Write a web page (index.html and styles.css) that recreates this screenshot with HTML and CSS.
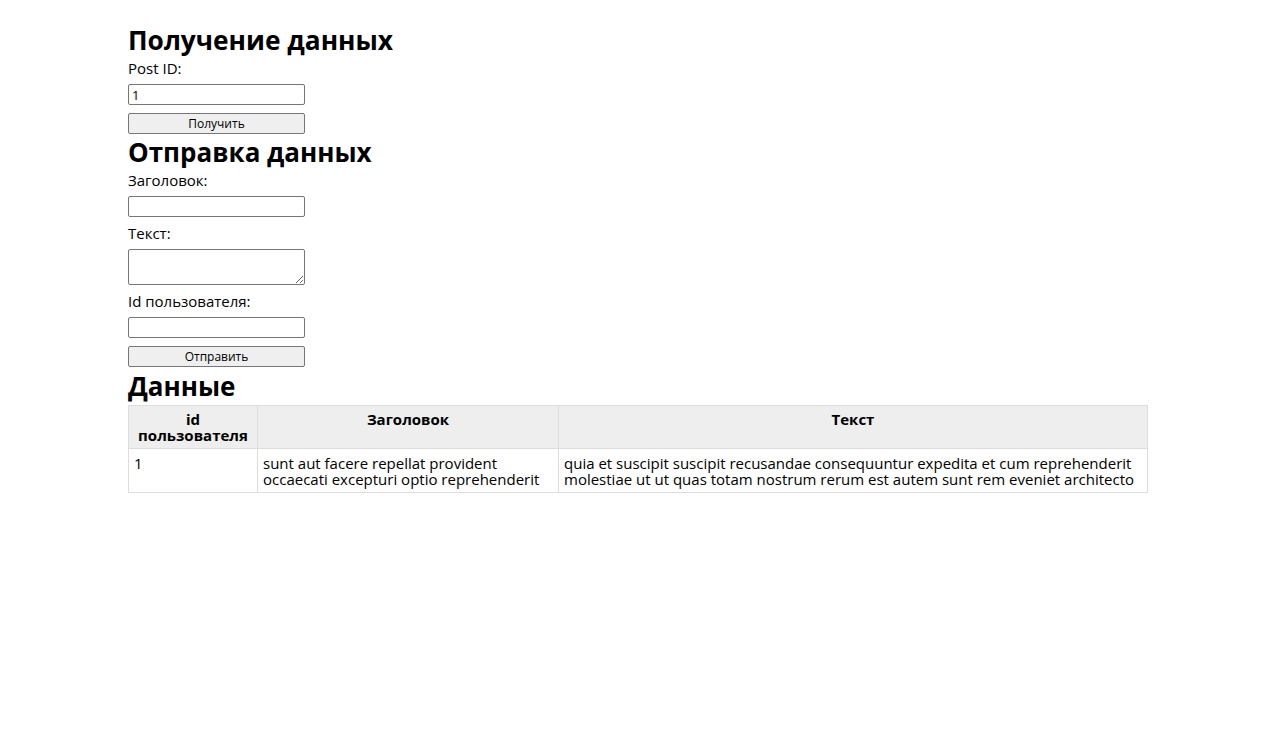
FILE: index.html
```html
<!DOCTYPE html>
<html lang="ru">
<head>
<meta charset="utf-8">
<title>Posts</title>
<link rel="stylesheet" href="styles.css">
</head>
<body>
<div class="page">
  <h1 class="title first">Получение данных</h1>
  <form class="form">
    <label class="label" for="postId">Post ID:</label>
    <input class="field" id="postId" type="text" value="1">
    <button class="btn" type="button">Получить</button>
  </form>

  <h1 class="title">Отправка данных</h1>
  <form class="form">
    <label class="label" for="title">Заголовок:</label>
    <input class="field" id="title" type="text">
    <label class="label gap" for="body">Текст:</label>
    <textarea class="area" id="body"></textarea>
    <label class="label gap" for="userId">Id пользователя:</label>
    <input class="field" id="userId" type="text">
    <button class="btn" type="button">Отправить</button>
  </form>

  <h1 class="title last">Данные</h1>
  <table class="data">
    <colgroup>
      <col class="c1"><col class="c2"><col class="c3">
    </colgroup>
    <thead>
      <tr><th>id пользователя</th><th>Заголовок</th><th>Текст</th></tr>
    </thead>
    <tbody>
      <tr>
        <td>1</td>
        <td>sunt aut facere repellat provident occaecati excepturi optio reprehenderit</td>
        <td>quia et suscipit suscipit recusandae consequuntur expedita et cum reprehenderit molestiae ut ut quas totam nostrum rerum est autem sunt rem eveniet architecto</td>
      </tr>
    </tbody>
  </table>
</div>
</body>
</html>
```

FILE: styles.css
```css
html, body {
  margin: 0;
  padding: 0;
  background: #fff;
}

body {
  font-family: "Open Sans", "Noto Sans", sans-serif;
  color: #000;
}

.page {
  width: 1020px;
  margin-left: 128px;
  padding-top: 25px;
}

.title {
  margin: 3px 0 0 0;
  padding-bottom: 3px;
  font-size: 26px;
  line-height: 30px;
  font-weight: 700;
}

.title.first {
  margin-top: 0;
  font-size: 26.3px;
}

.title.last {
  margin-top: 4px;
}

.form {
  display: flex;
  flex-direction: column;
  align-items: flex-start;
  margin: 0;
}

.label {
  font-size: 15px;
  line-height: 20px;
  margin-bottom: 6px;
}

.label.gap {
  margin-top: 6px;
}

.field,
.area {
  box-sizing: border-box;
  width: 177px;
  border: 1px solid #767676;
  border-radius: 2px;
  font-family: "Open Sans", sans-serif;
  font-size: 13px;
  padding: 1px 3px;
  margin: 0;
  background: #fff;
}

.field {
  height: 21px;
  line-height: 17px;
}

.area {
  display: block;
  height: 36px;
  resize: vertical;
}

.btn {
  box-sizing: border-box;
  width: 177px;
  height: 21px;
  margin-top: 8px;
  border: 1px solid #767676;
  border-radius: 2px;
  background: #efefef;
  font-family: "Open Sans", sans-serif;
  font-size: 12px;
  line-height: 17px;
  padding: 0;
  color: #000;
}

.data {
  width: 1019px;
  border-collapse: collapse;
  table-layout: fixed;
  margin-top: 1px;
  font-size: 15px;
  line-height: 16px;
}

.c1 { width: 129px; }
.c2 { width: 301px; }
.c3 { width: 589px; }

.data th,
.data td {
  border: 1px solid #ddd;
  vertical-align: top;
}

.data th {
  background: #eee;
  font-weight: 700;
  text-align: center;
  padding: 5px 6px 5px;
}

.data td {
  text-align: left;
  padding: 6px 5px 5px;
}
```
